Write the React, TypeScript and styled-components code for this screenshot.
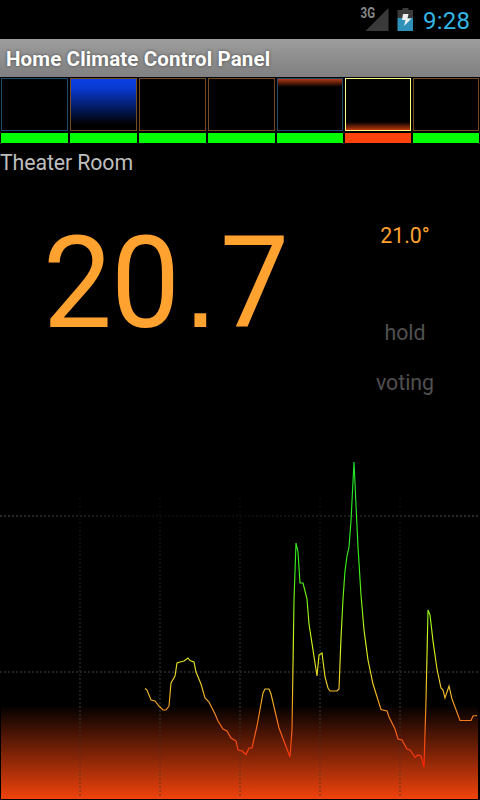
import React from "react";
import styled, { createGlobalStyle } from "styled-components";

const GlobalStyle = createGlobalStyle`
  body {
    margin: 0;
    background: #000;
    font-family: Roboto, "Noto Sans", sans-serif;
  }
`;

const Screen = styled.div`
  display: flex;
  flex-direction: column;
  width: 480px;
  height: 800px;
  overflow: hidden;
  background: #000;
`;

const StatusBar = styled.header`
  display: flex;
  align-items: flex-start;
  justify-content: flex-end;
  box-sizing: border-box;
  flex: none;
  height: 39px;
  padding-right: 10px;
`;

const StatusIcons = styled.svg`
  display: block;
  width: 56px;
  height: 39px;
`;

const Clock = styled.time`
  width: 47px;
  margin-left: 7px;
  color: #33b5e5;
  font-size: 24px;
  line-height: 42px;
  letter-spacing: 0.2px;
  white-space: nowrap;
`;

const TitleBar = styled.h1`
  flex: none;
  height: 38px;
  margin: 0;
  padding-left: 6px;
  background: linear-gradient(#9d9d9d, #858585 80%, #818181);
  color: #fff;
  font-size: 20.5px;
  font-weight: 700;
  line-height: 40px;
  letter-spacing: 0.13px;
  text-shadow: 0 0 3px #444;
  white-space: nowrap;
`;

const ZoneStrip = styled.nav`
  display: grid;
  grid-template-columns: repeat(4, 67px) repeat(3, 66px);
  gap: 2px;
  flex: none;
  padding: 0 1px;
`;

const Zone = styled.div`
  display: flex;
  flex-direction: column;
  gap: 2px;
`;

const ZoneLevel = styled.div<{ $outline: string; $fill?: string }>`
  box-sizing: border-box;
  height: 53px;
  margin-top: 1px;
  border: 1px solid ${(p) => p.$outline};
  background: ${(p) => p.$fill ?? "#000"};
  background-origin: border-box;
`;

const ZoneStatus = styled.div<{ $alert?: boolean }>`
  height: 10px;
  background: ${(p) => (p.$alert ? "#ff430b" : "#00ff00")};
`;

const RoomName = styled.h2`
  flex: none;
  height: 38px;
  margin: 0;
  color: #bebebe;
  font-size: 21.3px;
  font-weight: 400;
  line-height: 40px;
  letter-spacing: -0.1px;
`;

const Readings = styled.section`
  display: flex;
  flex: none;
  height: 259px;
`;

const Temperature = styled.div`
  box-sizing: border-box;
  width: 330px;
  padding: 27px 0 0 43px;
  color: #ffa22f;
  font-size: 128px;
  line-height: 150px;
  letter-spacing: -1.2px;
  white-space: nowrap;
  transform: scaleX(0.96);
  transform-origin: 43px 0;
`;

const Point = styled.span`
  margin: 0 4px 0 4.5px;
  font-family: "Liberation Sans", sans-serif;
  line-height: 0;
`;

const Controls = styled.div`
  display: flex;
  flex-direction: column;
  align-items: center;
  width: 150px;
  padding-top: 40px;
`;

const ControlText = styled.span<{ $color: string; $height: number }>`
  height: ${(p) => p.$height}px;
  color: ${(p) => p.$color};
  font-size: 21.3px;
  line-height: 30px;
`;

const Chart = styled.svg`
  display: block;
  flex: none;
  width: 480px;
  height: 360px;
`;

const BLUE = "#1f4a68";
const BROWN = "#744a22";

const zones = [
  { outline: BLUE },
  { outline: BROWN, fill: "linear-gradient(#0b40e4, #0839d0 20%, #000 88%)" },
  { outline: BROWN },
  { outline: BROWN },
  { outline: BLUE, fill: "linear-gradient(#c84018, #000 9px)" },
  { outline: "#ffff80", fill: "linear-gradient(#000 44px, #d8400b 53px)", alert: true },
  { outline: BROWN },
];

const history =
  "145,688.5 147,690 151,700 155,701 159,706 163,710 166,710 169,706 171,683 175,676 177,663 180,662 184,661 188,658 190,660.5 194,662 196,672 201,684 205,698 209,702 215,714 218,721 223,729 227,731 231,738 236,741 238,750 242,751 246,754.5 249,748 252,748 257,726 263,693 265,689 269,689 271,694 279,728 290,757 292,730 294,600 296,543 298,552 300,583 303,583 305,591 307,599 309,624 313,650 317,676 319,655 322,653 325,677 328,688 330,691 337,691 339,689 341,638 343,599 345,571 347,556 349,547 351,521 354,462 356,505 358,547 361,595 364,630 368,660 373,684 381,709.5 387,711 389,717 395,729 398,739 402,740 407,749 410,750 415,757.5 418,755 421,756 424,767 426,700 428,610 430,615 433,641 437,669 441,688 443,690 445,698 449,686 452,699 460,720.5 471,720.5 473,716 477,715.5";

function StatusGlyphs() {
  return (
    <StatusIcons viewBox="0 0 56 39" aria-label="3G signal, battery charging">
      <text x="0.5" y="18" fill="#888" fontFamily="Roboto, sans-serif" fontSize="14" fontWeight="700" textLength="14.5" lengthAdjust="spacingAndGlyphs">3G</text>
      <path d="M28.5 8v23H5.5z" fill="#3a3a3a" />
      <path d="M37.5 10h5V8h6v2h4.5v8H37.5z" fill="#3b3b3b" />
      <path d="M37.5 18h15.5v13H37.5z" fill="#2e91b9" />
      <path d="M43 14h5.5l-1 4.5h4L44 26l1.5-6H42z" fill="#eee" />
    </StatusIcons>
  );
}

function HistoryChart() {
  return (
    <Chart viewBox="0 440 480 360" aria-label="Temperature history">
      <defs>
        <linearGradient id="heat" gradientUnits="userSpaceOnUse" x1="0" y1="705" x2="0" y2="799">
          <stop offset="0" stopColor="#f0430c" stopOpacity="0" />
          <stop offset="1" stopColor="#f0430c" />
        </linearGradient>
        <linearGradient id="trace" gradientUnits="userSpaceOnUse" x1="0" y1="461" x2="0" y2="767">
          <stop offset="0" stopColor="#22e030" />
          <stop offset="0.36" stopColor="#38f018" />
          <stop offset="0.6" stopColor="#d8f81c" />
          <stop offset="0.74" stopColor="#eec52a" />
          <stop offset="0.88" stopColor="#fa6617" />
          <stop offset="1" stopColor="#ff1e05" />
        </linearGradient>
        <linearGradient id="gridFade" gradientUnits="userSpaceOnUse" x1="0" y1="490" x2="0" y2="800">
          <stop offset="0" stopColor="#333" stopOpacity="0.12" />
          <stop offset="0.5" stopColor="#333" stopOpacity="0.5" />
          <stop offset="0.7" stopColor="#383838" stopOpacity="0.55" />
          <stop offset="0.85" stopColor="#333" stopOpacity="0.25" />
          <stop offset="1" stopColor="#333" stopOpacity="0.4" />
        </linearGradient>
        <linearGradient id="upperLine" gradientUnits="userSpaceOnUse" x1="0" y1="0" x2="480" y2="0">
          <stop offset="0" stopColor="#2c2c2c" />
          <stop offset="0.15" stopColor="#1e1e1e" />
          <stop offset="0.3" stopColor="#0c0c0c" />
          <stop offset="0.5" stopColor="#0c0c0c" />
          <stop offset="0.72" stopColor="#1a1a1a" />
          <stop offset="1" stopColor="#2c2c2c" />
        </linearGradient>
      </defs>
      <rect x="1" y="705" width="477" height="94" fill="url(#heat)" />
      <g fill="url(#gridFade)">
        {[79, 159, 239, 319, 399].map((x) => (
          <path
            key={x}
            d={Array.from({ length: 75 }, (_, i) => `M${x} ${498 + i * 4}h2v2h-2z`).join("")}
          />
        ))}
      </g>
      <path d="M0 516H480" stroke="url(#upperLine)" strokeWidth="2" strokeDasharray="2 2" />
      <path d="M0 672H480" stroke="#222" strokeWidth="2" strokeDasharray="2 2" />
      <polyline points={history} fill="none" stroke="url(#trace)" strokeWidth="1.15" />
    </Chart>
  );
}

export default function App() {
  return (
    <Screen>
      <GlobalStyle />
      <StatusBar>
        <StatusGlyphs />
        <Clock>9:28</Clock>
      </StatusBar>
      <TitleBar>Home Climate Control Panel</TitleBar>
      <ZoneStrip>
        {zones.map((zone, i) => (
          <Zone key={i}>
            <ZoneLevel $outline={zone.outline} $fill={zone.fill} />
            <ZoneStatus $alert={zone.alert} />
          </Zone>
        ))}
      </ZoneStrip>
      <RoomName>Theater Room</RoomName>
      <Readings>
        <Temperature>
          20<Point>.</Point>7
        </Temperature>
        <Controls>
          <ControlText $color="#ffa22f" $height={97}>21.0°</ControlText>
          <ControlText $color="#505050" $height={50}>hold</ControlText>
          <ControlText $color="#505050" $height={30}>voting</ControlText>
        </Controls>
      </Readings>
      <HistoryChart />
    </Screen>
  );
}
